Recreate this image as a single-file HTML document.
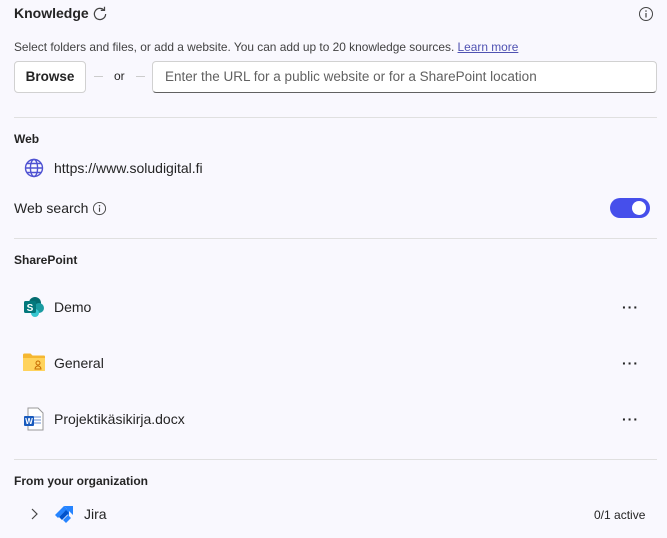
<!DOCTYPE html>
<html><head><style>
body{margin:0;width:667px;height:538px;background:#f9f8fe;font-family:"Liberation Sans",sans-serif;color:#242424;position:relative;overflow:hidden}
.a{position:absolute;white-space:nowrap}
.hr{position:absolute;left:14px;width:643px;height:1px;background:#e0e0e0}
.b{font-weight:bold;font-size:12px}
.t{font-size:14px}
.dots{position:absolute;left:622px;font-size:14px;letter-spacing:1px;font-weight:bold}
</style></head><body>
<div class="a" style="left:14px;top:5px;font-size:14px;font-weight:bold">Knowledge</div>
<svg class="a" style="left:91px;top:5px" width="18" height="18" viewBox="0 0 16 16"><path d="M13 8a5 5 0 1 1-1.6-3.7" fill="none" stroke="#444" stroke-width="1.1"/><path d="M12 1.5v3.3H8.7" fill="none" stroke="#444" stroke-width="1.1"/></svg>
<svg class="a" style="left:638px;top:6px" width="16" height="16" viewBox="0 0 16 16"><circle cx="8" cy="8" r="6.5" fill="none" stroke="#444" stroke-width="1"/><rect x="7.4" y="7" width="1.2" height="4.5" fill="#444"/><circle cx="8" cy="5" r=".8" fill="#444"/></svg>
<div class="a" style="left:14px;top:40px;font-size:11.9px;color:#424242">Select folders and files, or add a website. You can add up to 20 knowledge sources. <span style="color:#4f52b2;text-decoration:underline">Learn more</span></div>
<div class="a" style="left:14px;top:61px;width:70px;height:30px;border:1px solid #d1d1d1;border-radius:4px;background:#fff;font-weight:bold;font-size:13.5px;text-align:center;line-height:30px">Browse</div>
<div class="a" style="left:94px;top:76px;width:9px;height:1px;background:#ccc"></div>
<div class="a" style="left:114px;top:69px;font-size:12px">or</div>
<div class="a" style="left:136px;top:76px;width:9px;height:1px;background:#ccc"></div>
<div class="a" style="left:152px;top:61px;width:503px;height:30px;border:1px solid #d1d1d1;border-bottom-color:#616161;border-radius:4px;background:#fff;font-size:13.5px;line-height:30px;color:#616161;text-indent:12px">Enter the URL for a public website or for a SharePoint location</div>
<div class="hr" style="top:117px"></div>
<div class="a b" style="left:14px;top:132px">Web</div>
<svg class="a" style="left:24px;top:158px" width="20" height="20" viewBox="0 0 20 20" fill="none" stroke="#4f52d2" stroke-width="1.4"><circle cx="10" cy="10" r="8.5"/><ellipse cx="10" cy="10" rx="3.6" ry="8.5"/><path d="M1.5 10h17M3 5.5h14M3 14.5h14"/></svg>
<div class="a t" style="left:54px;top:160px">https://www.soludigital.fi</div>
<div class="a t" style="left:14px;top:200px">Web search</div>
<svg class="a" style="left:92px;top:201px" width="15" height="15" viewBox="0 0 16 16"><circle cx="8" cy="8" r="6.5" fill="none" stroke="#444" stroke-width="1"/><rect x="7.4" y="7" width="1.2" height="4.5" fill="#444"/><circle cx="8" cy="5" r=".8" fill="#444"/></svg>
<div class="a" style="left:610px;top:198px;width:40px;height:20px;border-radius:10px;background:#464feb"></div>
<div class="a" style="left:632px;top:201px;width:14px;height:14px;border-radius:7px;background:#fff"></div>
<div class="hr" style="top:238px"></div>
<div class="a b" style="left:14px;top:253px">SharePoint</div>
<svg class="a" style="left:23px;top:296px" width="22" height="22" viewBox="0 0 22 22"><circle cx="12" cy="7" r="6" fill="#036c70"/><circle cx="16" cy="12" r="5" fill="#1a9ba1"/><circle cx="12" cy="17" r="4" fill="#37c6d0"/><rect x="1" y="5" width="12" height="12" rx="1.5" fill="#03787c"/><text x="7" y="15" font-size="10" font-weight="bold" fill="#fff" text-anchor="middle" font-family="Liberation Sans">S</text></svg>
<div class="a t" style="left:54px;top:299px">Demo</div>
<div class="dots" style="top:299px">···</div>
<svg class="a" style="left:22px;top:352px" width="24" height="20" viewBox="0 0 24 20"><path d="M1 3a1.5 1.5 0 0 1 1.5-1.5h6l2 2H22a1 1 0 0 1 1 1V18a1 1 0 0 1-1 1H2a1 1 0 0 1-1-1z" fill="#f5b731"/><path d="M1 6h22v12a1 1 0 0 1-1 1H2a1 1 0 0 1-1-1z" fill="#ffd35c"/><circle cx="16" cy="11" r="2" fill="none" stroke="#c66b00" stroke-width="1"/><path d="M13 17a3 3 0 0 1 6 0z" fill="none" stroke="#c66b00" stroke-width="1"/></svg>
<div class="a t" style="left:54px;top:355px">General</div>
<div class="dots" style="top:355px">···</div>
<svg class="a" style="left:23px;top:407px" width="22" height="24" viewBox="0 0 22 24"><path d="M5 1h10l5 5v17H5z" fill="#fff" stroke="#999" stroke-width="1"/><path d="M10 10h8M10 13h8M10 16h8" stroke="#6a8fd0" stroke-width="1"/><rect x="1" y="9" width="10" height="10" rx="1" fill="#185abd"/><text x="6" y="17" font-size="8" font-weight="bold" fill="#fff" text-anchor="middle" font-family="Liberation Sans">W</text></svg>
<div class="a t" style="left:54px;top:411px">Projektikäsikirja.docx</div>
<div class="dots" style="top:411px">···</div>
<div class="hr" style="top:459px"></div>
<div class="a b" style="left:14px;top:474px">From your organization</div>
<svg class="a" style="left:29px;top:508px" width="10" height="12" viewBox="0 0 10 12"><path d="M3 1l5 5-5 5" fill="none" stroke="#444" stroke-width="1.2"/></svg>
<svg class="a" style="left:54px;top:505px" width="20" height="18" viewBox="0 0 20 18"><path d="M10 1h9v9z M8 4h7v7z" fill="#2684ff"/><path d="M1 10l9-9 0 0 3 3-9 9z" fill="#2684ff"/><path d="M5 12l7-7 3 3-7 7z" fill="#0052cc"/><path d="M9 15l5-5 3 3-5 5z" fill="#2684ff"/></svg>
<div class="a t" style="left:84px;top:506px">Jira</div>
<div class="a" style="left:594px;top:508px;font-size:12px">0/1 active</div>
</body></html>
